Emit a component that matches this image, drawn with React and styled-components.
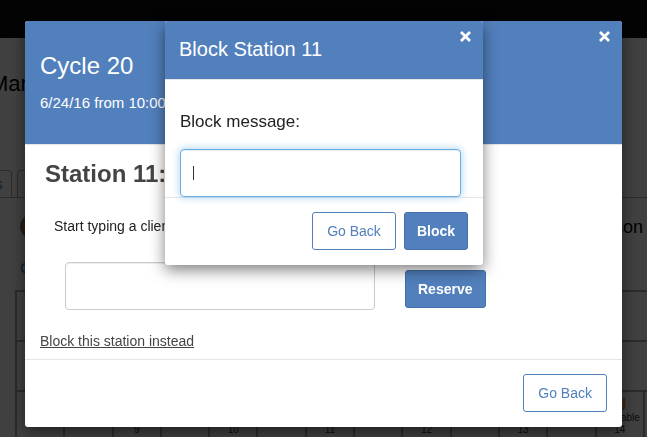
import styled, { createGlobalStyle } from "styled-components";

const GlobalStyle = createGlobalStyle`
  * { box-sizing: border-box; }
  html, body {
    margin: 0;
    padding: 0;
  }
  body {
    width: 647px;
    height: 437px;
    overflow: hidden;
    background: #fff;
    font-family: "Liberation Sans", Arial, Helvetica, sans-serif;
  }
`;

const BLUE = "#5280bd";

/* ---------- page behind the dialogs ---------- */

const Page = styled.div`
  height: 437px;
  overflow: hidden;
  background: #fff;
  color: #000;
`;

const NavBar = styled.div`
  height: 38px;
  background: #0d0d0d;
`;

const PageTitle = styled.h1`
  margin: 33px 0 0 -10px;
  font-size: 22px;
  line-height: 26px;
  font-weight: 400;
  white-space: nowrap;
`;

const TabBar = styled.div`
  display: flex;
  align-items: flex-end;
  gap: 5px;
  height: 28px;
  margin: 73px 0 0 -57px;
  border-bottom: 1px solid #aaa;
`;

const Tab = styled.div`
  height: 27px;
  padding: 0 8px;
  border: 1px solid #aaa;
  border-bottom: 0;
  border-radius: 4px 4px 0 0;
  font-size: 14px;
  line-height: 26px;
  color: #337ab7;
  white-space: nowrap;
`;

const Summary = styled.div`
  display: flex;
  justify-content: space-between;
  height: 92px;
  padding: 0 4px 0 20px;
`;

const SummaryLeft = styled.div`
  display: flex;
  flex-direction: column;
  align-items: flex-start;
`;

const Avatar = styled.div`
  width: 25px;
  height: 25px;
  margin-top: 16px;
  border-radius: 50%;
  background: #9a7b5c;
`;

const PageLink = styled.span`
  margin-top: 19px;
  font-size: 15px;
  line-height: 20px;
  color: #337ab7;
  white-space: nowrap;
`;

const SideText = styled.div`
  margin-top: 18px;
  font-size: 18px;
  line-height: 22px;
  white-space: nowrap;
`;

const Schedule = styled.div`
  margin-left: 15px;
  border-left: 2px solid #aaa;
  border-top: 2px solid #aaa;
`;

const ScheduleRow = styled.div`
  height: 50px;
  border-bottom: 2px solid #aaa;
`;

const SlotRow = styled.div`
  display: grid;
  grid-template-columns: repeat(13, 48.3px);
`;

const Slot = styled.div`
  display: flex;
  flex-direction: column;
  align-items: center;
  height: 50px;
  padding-top: 6px;
  border-right: 2px solid #aaa;
  color: #333;
  font-size: 10px;
`;

const SlotIcon = styled.span`
  display: flex;
  height: 14px;
  visibility: ${(p) => (p.$show ? "visible" : "hidden")};
`;

const SlotLabel = styled.span`
  height: 12px;
  line-height: 12px;
`;

const SlotNumber = styled.span`
  line-height: 11px;
`;

const Backdrop = styled.div`
  position: fixed;
  inset: 0;
  background: rgba(0, 0, 0, 0.75);
  z-index: 10;
`;

/* ---------- dialogs ---------- */

const Modal = styled.div`
  position: fixed;
  top: ${(p) => p.$top}px;
  left: ${(p) => p.$left}px;
  width: ${(p) => p.$width}px;
  z-index: ${(p) => p.$z};
  background: #fff;
  border-radius: 3px;
  overflow: hidden;
  box-shadow: 0 5px 15px rgba(0, 0, 0, 0.5);
`;

const Header = styled.div`
  position: relative;
  padding: ${(p) => p.$pad};
  background: ${BLUE};
  color: #fff;
  border-bottom: 1px solid #e5e5e5;
`;

const CycleTitle = styled.h3`
  margin: 0;
  font-size: 24px;
  line-height: 26px;
  font-weight: 400;
`;

const CycleTime = styled.div`
  margin-top: 14px;
  font-size: 15px;
  line-height: 20px;
  white-space: nowrap;
`;

const DialogTitle = styled.h4`
  margin: 0;
  font-size: 20px;
  line-height: 22px;
  font-weight: 400;
`;

const Close = styled.button`
  position: absolute;
  top: 10px;
  right: 12px;
  display: flex;
  width: 11px;
  height: 11px;
  padding: 0;
  border: 0;
  background: none;
  cursor: pointer;
`;

const Body = styled.div`
  padding: ${(p) => p.$pad};
`;

const StationTitle = styled.h2`
  margin: 0 0 0 5px;
  font-size: 24px;
  line-height: 26px;
  font-weight: 700;
  color: #444;
`;

const Hint = styled.p`
  margin: 29px 0 0 14px;
  font-size: 14px;
  line-height: 20px;
  color: #222;
  white-space: nowrap;
`;

const ReserveRow = styled.div`
  display: flex;
  align-items: flex-end;
  gap: 30px;
  margin: 26px 0 0 25px;
`;

const TextInput = styled.input`
  display: block;
  width: ${(p) => p.$width}px;
  height: 48px;
  padding: 6px 12px;
  border: 1px solid ${(p) => (p.$focused ? "#66afe9" : "#ccc")};
  border-radius: 4px;
  font: inherit;
  font-size: 14px;
  outline: none;
  box-shadow: inset 0 1px 1px rgba(0, 0, 0, 0.075)
    ${(p) => (p.$focused ? ", 0 0 8px rgba(102, 175, 233, 0.6)" : "")};
`;

const InputWrap = styled.div`
  position: relative;
  margin-top: 15px;
`;

const Caret = styled.span`
  position: absolute;
  top: 17px;
  left: 13px;
  width: 1px;
  height: 14px;
  background: #333;
`;

const Label = styled.label`
  display: block;
  font-size: 17px;
  line-height: 24px;
  color: #222;
`;

const Button = styled.button`
  height: 38px;
  margin-bottom: ${(p) => p.$lift || 0}px;
  padding: 0 ${(p) => (p.$primary ? 12 : 14)}px;
  border: 1px solid ${(p) => (p.$primary ? "#4270ae" : BLUE)};
  border-radius: 3px;
  background: ${(p) => (p.$primary ? BLUE : "#fff")};
  color: ${(p) => (p.$primary ? "#fff" : BLUE)};
  font-family: inherit;
  font-size: 14px;
  font-weight: ${(p) => (p.$primary ? 700 : 400)};
  white-space: nowrap;
  cursor: pointer;
`;

const TextLink = styled.a`
  display: inline-block;
  margin-top: 21px;
  font-size: 14px;
  line-height: 20px;
  color: #444;
  text-decoration: underline;
  cursor: pointer;
`;

const Footer = styled.div`
  display: flex;
  justify-content: flex-end;
  gap: 8px;
  padding: 14px 15px 15px;
  border-top: 1px solid #e5e5e5;
`;

function CloseIcon() {
  return (
    <svg width="11" height="11" viewBox="0 0 11 11">
      <path d="M1 1 L10 10 M10 1 L1 10" stroke="#fff" strokeWidth="2.8" />
    </svg>
  );
}

function SeatIcon() {
  return (
    <svg width="14" height="14" viewBox="0 0 14 14">
      <path
        d="M11 1 V8 A4.5 4.5 0 0 1 2 8"
        fill="none"
        stroke="#e8913a"
        strokeWidth="2.4"
        strokeLinecap="round"
      />
    </svg>
  );
}

// time labels sit under every other slot, starting with the third
const slots = Array.from({ length: 13 }, (_, i) => ({
  id: i,
  number: i >= 2 && i % 2 === 0 ? 8 + i / 2 : null,
  open: i === 12,
}));

export default function App() {
  return (
    <>
      <GlobalStyle />
      <Page>
        <NavBar />
        <PageTitle>Manage Cycles</PageTitle>
        <TabBar>
          <Tab>Stations</Tab>
          <Tab>Schedule</Tab>
        </TabBar>
        <Summary>
          <SummaryLeft>
            <Avatar />
            <PageLink>Cycle 20 roster</PageLink>
          </SummaryLeft>
          <SideText>Add Person</SideText>
        </Summary>
        <Schedule>
          <ScheduleRow />
          <ScheduleRow />
          <SlotRow>
            {slots.map((s) => (
              <Slot key={s.id}>
                <SlotIcon $show={s.open}>
                  <SeatIcon />
                </SlotIcon>
                <SlotLabel>{s.open ? "Available" : ""}</SlotLabel>
                <SlotNumber>{s.number ?? ""}</SlotNumber>
              </Slot>
            ))}
          </SlotRow>
        </Schedule>
      </Page>

      <Backdrop />

      <Modal $top={21} $left={25} $width={597} $z={20}>
        <Header $pad="32px 15px 31px">
          <CycleTitle>Cycle 20</CycleTitle>
          <CycleTime>6/24/16 from 10:00 AM to 10:45 AM</CycleTime>
          <Close aria-label="Close">
            <CloseIcon />
          </Close>
        </Header>
        <Body $pad="16px 15px 8px">
          <StationTitle>Station 11: Open</StationTitle>
          <Hint>Start typing a client's name to reserve this station</Hint>
          <ReserveRow>
            <TextInput $width={310} />
            <Button $primary $lift={2}>Reserve</Button>
          </ReserveRow>
          <TextLink>Block this station instead</TextLink>
        </Body>
        <Footer>
          <Button>Go Back</Button>
        </Footer>
      </Modal>

      <Modal $top={21} $left={165} $width={318} $z={30}>
        <Header $pad="17px 15px 19px 14px">
          <DialogTitle>Block Station 11</DialogTitle>
          <Close aria-label="Close">
            <CloseIcon />
          </Close>
        </Header>
        <Body $pad="30px 22px 0 15px">
          <Label>Block message:</Label>
          <InputWrap>
            <TextInput $width={281} $focused />
            <Caret />
          </InputWrap>
        </Body>
        <Footer>
          <Button>Go Back</Button>
          <Button $primary>Block</Button>
        </Footer>
      </Modal>
    </>
  );
}
